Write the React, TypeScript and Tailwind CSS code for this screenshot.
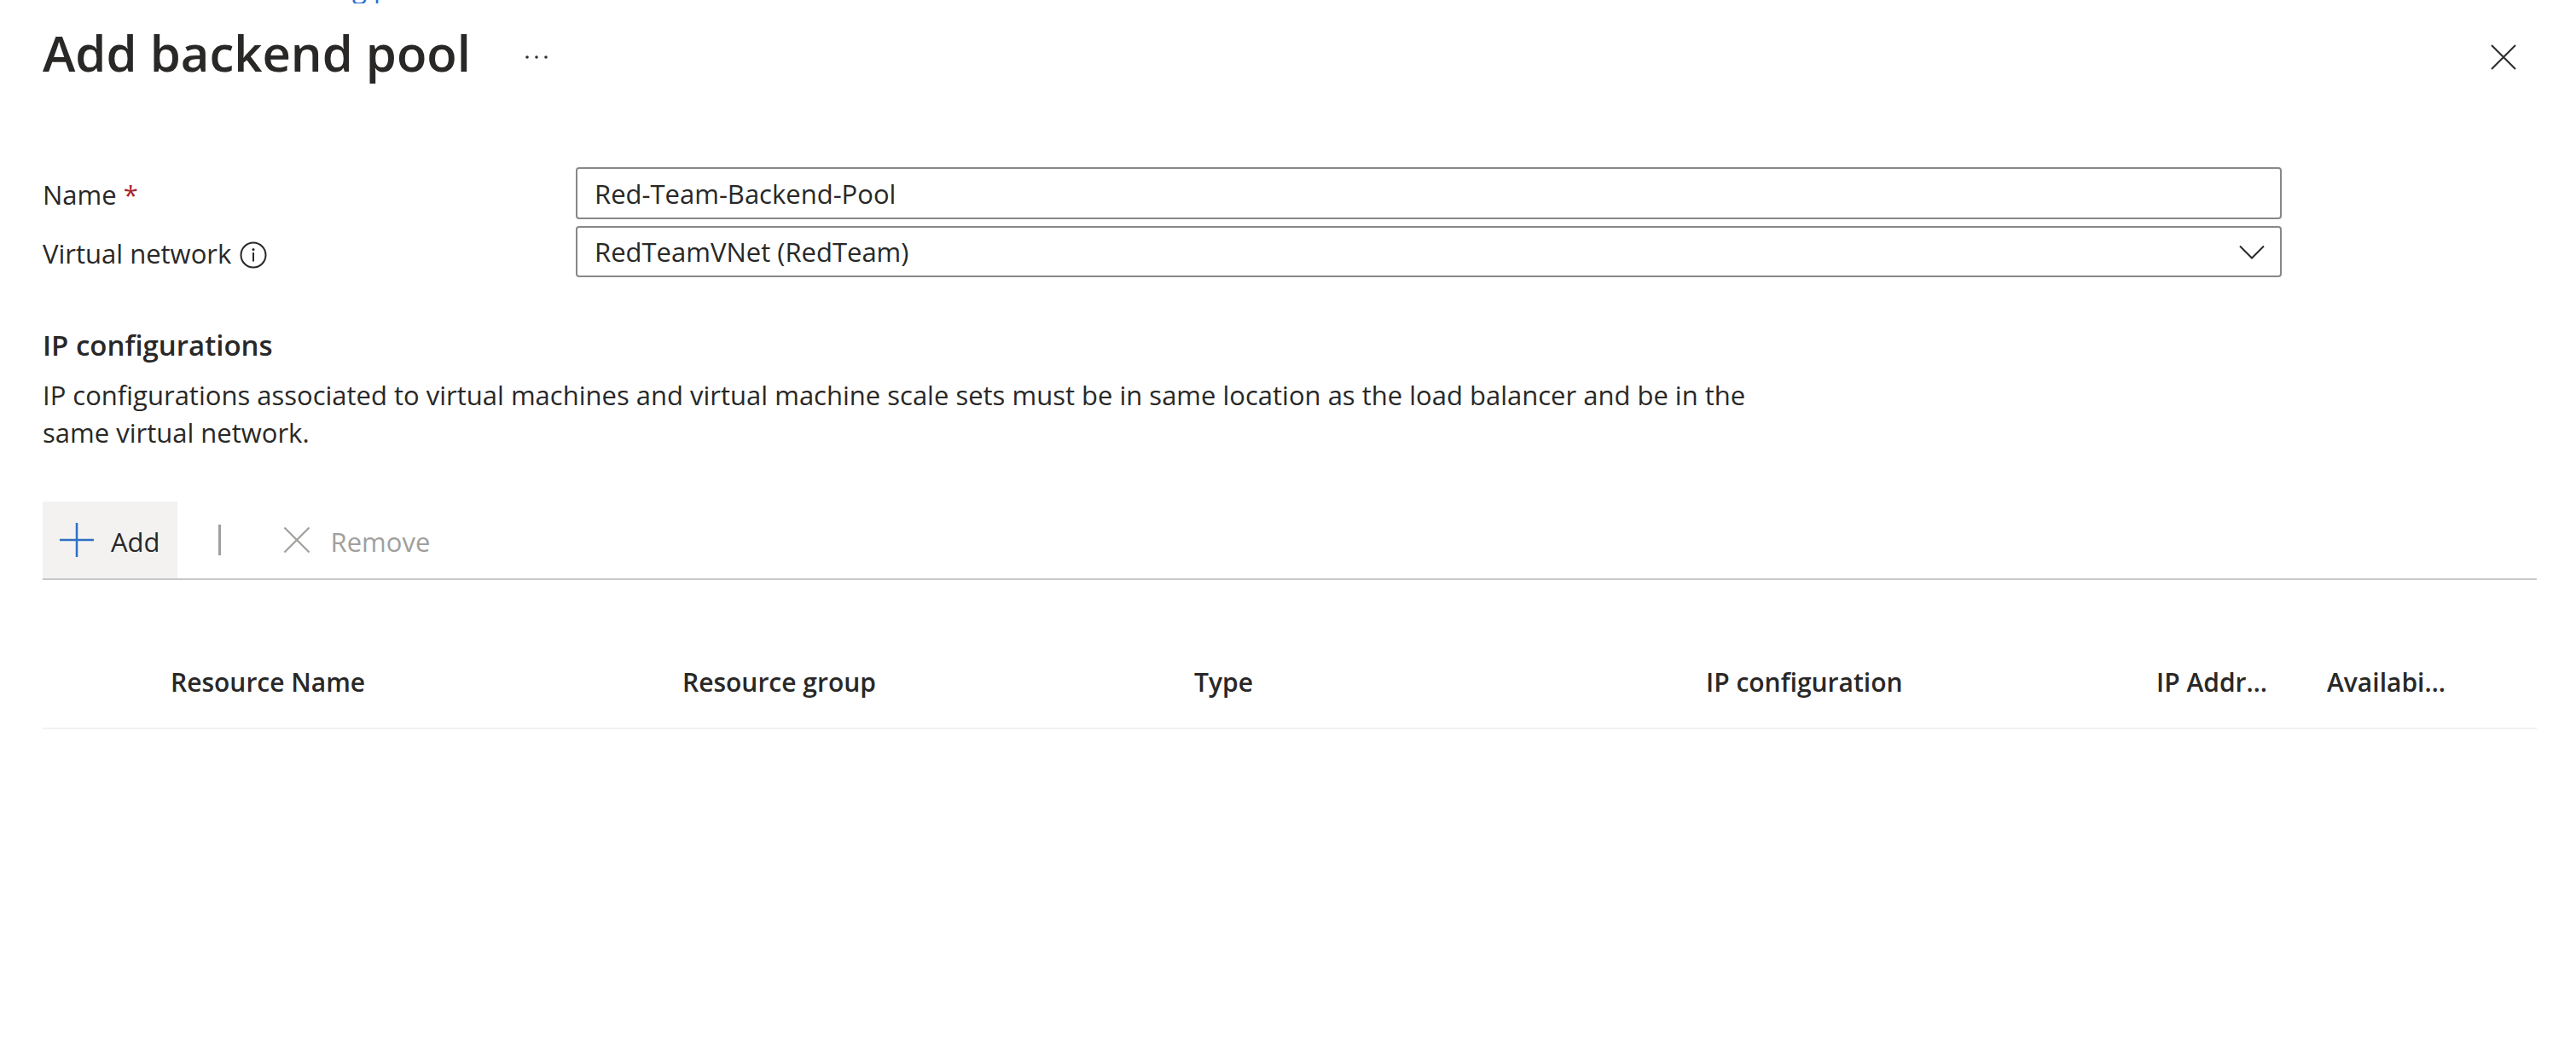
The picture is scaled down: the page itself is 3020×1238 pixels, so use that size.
import React from "react";

const columns = [
  { label: "Resource Name", size: "w-[600px] pr-[60px]" },
  { label: "Resource group", size: "w-[600px] pr-[60px]" },
  { label: "Type", size: "w-[600px] pr-[60px]" },
  { label: "IP configuration", size: "w-[528px] pr-[60px]" },
  { label: "IP Address", size: "w-[200px] pr-[60px]" },
  { label: "Availability zone", size: "w-[246px] pr-[102px]" },
];

export default function App() {
  return (
    <main className="bg-white pl-[50px] pr-[46px] font-['Open_Sans','Noto_Sans',sans-serif] text-[31px] leading-[44px] text-[#292827]">
      <nav aria-label="Breadcrumb" className="flex h-1 items-end overflow-hidden pl-[363px] text-[#2b6cd4]">
        <a href="#" className="-mb-1">
          g p
        </a>
      </nav>

      <header className="flex h-32 items-start pt-[18px]">
        <h1 className="text-[58px] font-semibold leading-[80px]">Add backend pool</h1>
        <button aria-label="More actions" className="ml-[62px] mt-[38px]">
          <svg width="28" height="14" viewBox="0 0 28 14" fill="#323130">
            <circle cx="4" cy="7" r="1.8" />
            <circle cx="15" cy="7" r="1.8" />
            <circle cx="26" cy="7" r="1.8" />
          </svg>
        </button>
        <button aria-label="Close" className="ml-auto mr-6 mt-[30px]">
          <svg width="30" height="30" viewBox="0 0 30 30" fill="none" stroke="#323130" strokeWidth="2.2">
            <path d="M1 1 29 29M29 1 1 29" />
          </svg>
        </button>
      </header>

      <form className="flex flex-col gap-2 pt-16">
        <div className="flex items-center">
          <label htmlFor="name" className="w-[625px] shrink-0 pt-0.5">
            Name <span className="text-[#a4262c]">*</span>
          </label>
          <input
            id="name"
            defaultValue="Red-Team-Backend-Pool"
            className="h-[61px] w-full max-w-[2000px] rounded-[4px] border-2 border-[#8a8886] px-5"
          />
        </div>
        <div className="flex items-center">
          <div className="flex w-[625px] shrink-0 items-center gap-2.5 pt-1">
            <label htmlFor="vnet">Virtual network</label>
            <svg className="mt-1" width="32" height="32" viewBox="0 0 32 32" fill="none" stroke="#292827" strokeWidth="2">
              <circle cx="16" cy="16" r="14.5" />
              <path d="M16 13V23.5" />
              <circle cx="16" cy="9.5" r="1.5" fill="#292827" stroke="none" />
            </svg>
          </div>
          <div className="relative w-full max-w-[2000px]">
            <select
              id="vnet"
              className="block h-[60px] w-full appearance-none rounded-[4px] border-2 border-[#8a8886] bg-white px-5"
            >
              <option>RedTeamVNet (RedTeam)</option>
            </select>
            <svg
              className="pointer-events-none absolute right-5 top-[22px]"
              width="30"
              height="18"
              viewBox="0 0 30 18"
              fill="none"
              stroke="#292827"
              strokeWidth="2"
            >
              <path d="M1 1.5 15 15.5 29 1.5" />
            </svg>
          </div>
        </div>
      </form>

      <section className="pt-[58px]">
        <h2 className="text-[33px] font-semibold">IP configurations</h2>
        <p className="max-w-[2020px] pt-3.5">
          IP configurations associated to virtual machines and virtual machine scale sets must be in same location as
          the load balancer and be in the same virtual network.
        </p>
      </section>

      <div role="toolbar" className="mt-[59px] flex items-stretch border-b-2 border-[#c8c8c8]">
        <button className="flex h-[90px] items-center gap-5 bg-[#f3f2f1] px-5">
          <svg width="40" height="40" viewBox="0 0 40 40" fill="none" stroke="#2f6fc4" strokeWidth="2.5">
            <path d="M20 0V40M0 20H40" />
          </svg>
          <span className="pt-1">Add</span>
        </button>
        <span className="ml-12 h-9 w-[3px] self-center bg-[#a19f9d]" />
        <button disabled className="ml-[73px] flex items-center gap-6 text-[#a19f9d]">
          <svg width="32" height="32" viewBox="0 0 32 32" fill="none" stroke="#a19f9d" strokeWidth="2.2">
            <path d="M1.5 1.5 30.5 30.5M30.5 1.5 1.5 30.5" />
          </svg>
          <span className="pt-1">Remove</span>
        </button>
      </div>

      <table className="mt-16 w-full table-fixed text-[30px]">
        <thead>
          <tr className="h-[110px] border-b-2 border-[#f3f2f1]">
            <td className="w-[150px]" />
            {columns.map((column) => (
              <th key={column.label} scope="col" className={`${column.size} truncate pt-0.5 text-left font-semibold`}>
                {column.label}
              </th>
            ))}
          </tr>
        </thead>
      </table>
    </main>
  );
}
